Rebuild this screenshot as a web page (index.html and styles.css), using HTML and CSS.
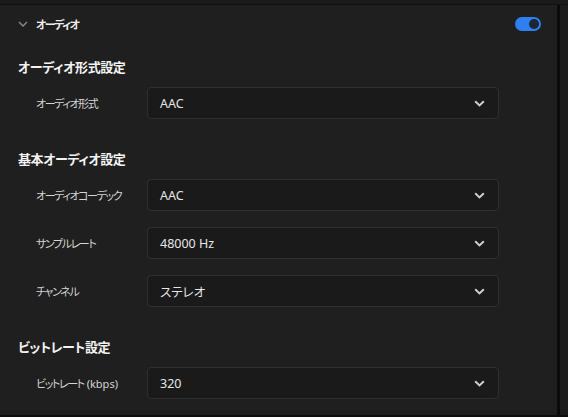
FILE: index.html
```html
<!DOCTYPE html>
<html lang="ja">
<head>
    <meta charset="UTF-8">
    <title>オーディオ設定</title>
    <link rel="stylesheet" href="styles.css">
</head>
<body>
    <div class="top-strip"></div>
    <div class="layout">
        <div class="panel">
            <div class="panel-header">
                <svg class="collapse" width="10" height="6" viewBox="0 0 10 6"><path d="M1 1l4 4 4-4" fill="none" stroke="#8a8a8a" stroke-width="1.4"/></svg>
                <span class="panel-title">オーディオ</span>
                <div class="toggle"><span class="knob"></span></div>
            </div>

            <div class="panel-body">
                <section class="group">
                    <h2>オーディオ形式設定</h2>
                    <div class="rows">
                        <div class="row">
                            <label>オーディオ形式</label>
                            <div class="select"><span>AAC</span><svg width="11" height="7" viewBox="0 0 11 7"><path d="M1.2 1.2l4.3 4.2 4.3-4.2" fill="none" stroke="#cfcfcf" stroke-width="2"/></svg></div>
                        </div>
                    </div>
                </section>

                <section class="group">
                    <h2>基本オーディオ設定</h2>
                    <div class="rows">
                        <div class="row">
                            <label>オーディオコーデック</label>
                            <div class="select"><span>AAC</span><svg width="11" height="7" viewBox="0 0 11 7"><path d="M1.2 1.2l4.3 4.2 4.3-4.2" fill="none" stroke="#cfcfcf" stroke-width="2"/></svg></div>
                        </div>
                        <div class="row">
                            <label>サンプルレート</label>
                            <div class="select"><span>48000 Hz</span><svg width="11" height="7" viewBox="0 0 11 7"><path d="M1.2 1.2l4.3 4.2 4.3-4.2" fill="none" stroke="#cfcfcf" stroke-width="2"/></svg></div>
                        </div>
                        <div class="row">
                            <label>チャンネル</label>
                            <div class="select"><span>ステレオ</span><svg width="11" height="7" viewBox="0 0 11 7"><path d="M1.2 1.2l4.3 4.2 4.3-4.2" fill="none" stroke="#cfcfcf" stroke-width="2"/></svg></div>
                        </div>
                    </div>
                </section>

                <section class="group">
                    <h2>ビットレート設定</h2>
                    <div class="rows">
                        <div class="row">
                            <label>ビットレート<span class="unit"> (kbps)</span></label>
                            <div class="select"><span>320</span><svg width="11" height="7" viewBox="0 0 11 7"><path d="M1.2 1.2l4.3 4.2 4.3-4.2" fill="none" stroke="#cfcfcf" stroke-width="2"/></svg></div>
                        </div>
                    </div>
                </section>
            </div>
        </div>
        <div class="divider"></div>
        <div class="side"></div>
    </div>
</body>
</html>
```

FILE: styles.css
```css
* {
    margin: 0;
    padding: 0;
    box-sizing: border-box;
}

body {
    font-family: "Noto Sans", "Noto Sans CJK JP", sans-serif;
    font-feature-settings: "palt";
    background: #0f0f0f;
    color: #ddd;
    width: 568px;
    height: 417px;
    overflow: hidden;
}

.top-strip {
    height: 5px;
    background: #1b1b1b;
    border-bottom: 1px solid #111;
}

.layout {
    display: flex;
    height: 410px;
}

.panel {
    width: 557px;
    background: #1f1f1f;
}

.divider {
    width: 3px;
    background: #0b0b0b;
}

.side {
    flex: 1;
    background: #1c1c1c;
}

.panel-header {
    height: 38px;
    display: flex;
    align-items: center;
    padding: 0 16px 0 18px;
}

.collapse {
    margin-right: 8px;
}

.panel-title {
    font-family: "Noto Sans CJK JP", sans-serif;
    font-size: 11px;
    font-weight: bold;
    letter-spacing: -1.5px;
    color: #eee;
    flex: 1;
}

.toggle {
    width: 26px;
    height: 14px;
    border-radius: 7px;
    background: #2f7ff0;
    display: flex;
    align-items: center;
    justify-content: flex-end;
    padding-right: 2px;
}

.knob {
    width: 10px;
    height: 10px;
    border-radius: 50%;
    background: #1d2633;
}

.panel-body {
    padding: 14px 0 0 18px;
    display: flex;
    flex-direction: column;
    gap: 30px;
}

.group h2 {
    font-family: "Noto Sans CJK JP", sans-serif;
    font-size: 13px;
    font-weight: bold;
    line-height: 20px;
    letter-spacing: -0.4px;
    color: #f2f2f2;
    margin-bottom: 10px;
}

.rows {
    display: flex;
    flex-direction: column;
    gap: 16px;
}

.row {
    display: flex;
    align-items: center;
    padding-left: 18px;
}

.row label {
    width: 111px;
    font-family: "Noto Sans", "Noto Sans CJK JP", sans-serif;
    font-size: 11px;
    letter-spacing: -1.4px;
    color: #d4d4d4;
}

.row label .unit {
    letter-spacing: 0;
}

.select {
    width: 352px;
    height: 32px;
    background: #1a1a1a;
    border: 1px solid #2f2f2f;
    border-radius: 4px;
    display: flex;
    align-items: center;
    justify-content: space-between;
    padding: 0 13px 0 12px;
    font-size: 12.5px;
    color: #e6e6e6;
}
```
